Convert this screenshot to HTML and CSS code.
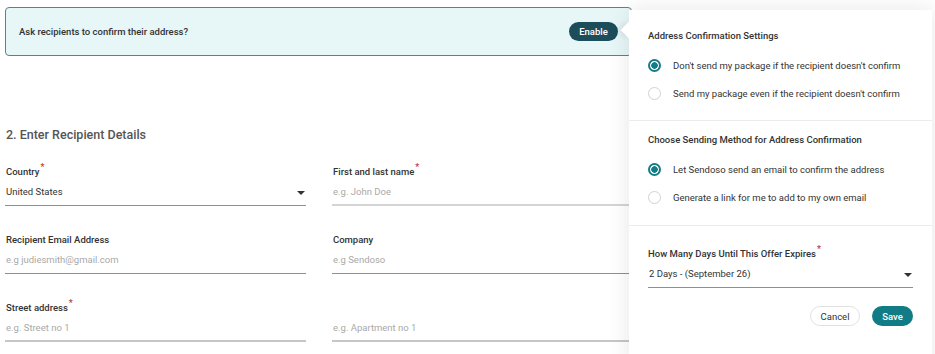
FILE: index.html
```html
<!DOCTYPE html>
<html>
<head>
<meta charset="utf-8">
<link rel="stylesheet" href="styles.css">
</head>
<body>
<div class="page">
  <div class="banner">
    <span class="banner-text">Ask recipients to confirm their address?</span>
    <button class="btn-enable">Enable</button>
  </div>
  <h2 class="heading">2. Enter Recipient Details</h2>
  <div class="form-grid">
    <div class="field">
      <div class="label">Country<span class="req">*</span></div>
      <div class="input dark select"><span class="value">United States</span><span class="caret"></span></div>
    </div>
    <div class="field">
      <div class="label">First and last name<span class="req">*</span></div>
      <div class="input light thick"><span class="ph">e.g. John Doe</span></div>
    </div>
    <div class="field">
      <div class="label">Recipient Email Address</div>
      <div class="input dark"><span class="ph">e.g judiesmith@gmail.com</span></div>
    </div>
    <div class="field">
      <div class="label">Company</div>
      <div class="input dark"><span class="ph">e.g Sendoso</span></div>
    </div>
    <div class="field">
      <div class="label">Street address<span class="req">*</span></div>
      <div class="input light last-row"><span class="ph">e.g. Street no 1</span></div>
    </div>
    <div class="field">
      <div class="label"></div>
      <div class="input light last-row"><span class="ph">e.g. Apartment no 1</span></div>
    </div>
  </div>
</div>

<div class="popover">
  <div class="arrow"></div>
  <div class="section first">
    <div class="title">Address Confirmation Settings</div>
    <div class="radio-row"><span class="radio checked"></span><span>Don't send my package if the recipient doesn't confirm</span></div>
    <div class="radio-row"><span class="radio"></span><span>Send my package even if the recipient doesn't confirm</span></div>
  </div>
  <div class="section">
    <div class="title">Choose Sending Method for Address Confirmation</div>
    <div class="radio-row"><span class="radio checked"></span><span>Let Sendoso send an email to confirm the address</span></div>
    <div class="radio-row"><span class="radio"></span><span>Generate a link for me to add to my own email</span></div>
  </div>
  <div class="section last">
    <div class="title">How Many Days Until This Offer Expires<span class="req">*</span></div>
    <div class="input dark select pop-select"><span class="value">2 Days - (September 26)</span><span class="caret"></span></div>
    <div class="actions">
      <button class="btn-cancel">Cancel</button>
      <button class="btn-save">Save</button>
    </div>
  </div>
</div>
</body>
</html>
```

FILE: styles.css
```css
* { box-sizing: border-box; }
html, body {
  margin: 0;
  padding: 0;
  background: #ffffff;
  font-family: Roboto, "Liberation Sans", Arial, sans-serif;
  color: #333333;
}
body {
  width: 935px;
  height: 354px;
  overflow: hidden;
  position: relative;
}
.page {
  padding: 7px 0 0 5px;
}
.banner {
  width: 627px;
  height: 49px;
  background: #e7f6f7;
  border: 1px solid #5f7f8b;
  border-radius: 4px;
  display: flex;
  align-items: center;
  justify-content: space-between;
  padding: 0 13px 0 13px;
}
.banner-text {
  font-size: 9.5px;
  font-weight: 500;
  color: #333;
}
.btn-enable {
  background: #1c4d5b;
  color: #fff;
  border: none;
  border-radius: 10px;
  width: 49px;
  height: 19px;
  font-family: inherit;
  font-size: 9.5px;
  font-weight: 500;
  padding: 0;
  margin-right: 0;
}
.heading {
  margin: 71px 0 0 1px;
  font-size: 12.5px;
  font-weight: 500;
  color: #555;
  line-height: 16px;
}
.form-grid {
  display: grid;
  grid-template-columns: 301px 301px;
  column-gap: 26px;
  row-gap: 27px;
  margin-top: 22px;
}
.field { display: flex; flex-direction: column; }
.label {
  height: 14px;
  line-height: 14px;
  font-size: 9.5px;
  font-weight: 500;
  color: #333;
  padding-left: 1px;
}
.req {
  color: #c0392b;
  font-size: 9px;
  position: relative;
  top: -5px;
  margin-left: 1px;
}
.input {
  margin-top: 3px;
  height: 24px;
  padding: 2px 0 0 1px;
  line-height: 16px;
  font-size: 9.5px;
  border-bottom: 1px solid #999;
  display: flex;
  justify-content: space-between;
}
.input.dark { border-bottom-color: #8f8f8f; }
.input.light { border-bottom-color: #b8b8b8; }
.input.thick { border-bottom: 2px solid #d4d4d4; height: 24px; }
.input.last-row { border-bottom: 2px solid #c6c6c6; }
.ph { color: #a9a9a9; }
.value { color: #333; }
.caret {
  width: 0;
  height: 0;
  border-left: 4px solid transparent;
  border-right: 4px solid transparent;
  border-top: 4px solid #333;
  margin-top: 7px;
  margin-right: 1px;
}

.popover {
  position: absolute;
  left: 629px;
  top: 10px;
  width: 303px;
  height: 360px;
  background: #fff;
  box-shadow: 0 0 22px rgba(0,0,0,0.10);
}
.arrow {
  position: absolute;
  left: -6px;
  top: 14px;
  width: 12px;
  height: 12px;
  background: #fff;
  transform: rotate(45deg);
  box-shadow: -3px 3px 5px rgba(0,0,0,0.06);
}
.section {
  position: relative;
  padding: 12px 19px 14px 19px;
  border-bottom: 1px solid #ececec;
  background: #fff;
}
.section.first { padding-top: 19px; padding-bottom: 13px; }
.section.last { border-bottom: none; padding-top: 21px; }
.title {
  font-size: 9.5px;
  font-weight: 500;
  line-height: 14px;
  color: #333;
}
.section .title { margin-bottom: 8px; }
.radio-row {
  display: flex;
  align-items: center;
  height: 28px;
  font-size: 9.5px;
  color: #333;
}
.radio {
  width: 13px;
  height: 13px;
  border-radius: 50%;
  border: 1px solid #d2d2d2;
  margin-right: 12px;
  flex: none;
  background: #fff;
}
.radio.checked {
  border: 2px solid #127d86;
  background: radial-gradient(circle, #127d86 0 3px, #fff 3.5px);
}
.section.last .title { margin-bottom: 0; }
.pop-select { margin-top: 3px; height: 24px; }
.actions {
  display: flex;
  justify-content: flex-end;
  gap: 12px;
  margin-top: 18px;
}
.btn-cancel, .btn-save {
  height: 20px;
  border-radius: 10px;
  font-family: inherit;
  font-size: 9.5px;
  padding: 0;
}
.btn-cancel {
  width: 50px;
  background: #fff;
  border: 1px solid #e2e2e2;
  color: #333;
}
.btn-save {
  width: 41px;
  background: #117c85;
  border: none;
  color: #fff;
  font-weight: 500;
}
```
